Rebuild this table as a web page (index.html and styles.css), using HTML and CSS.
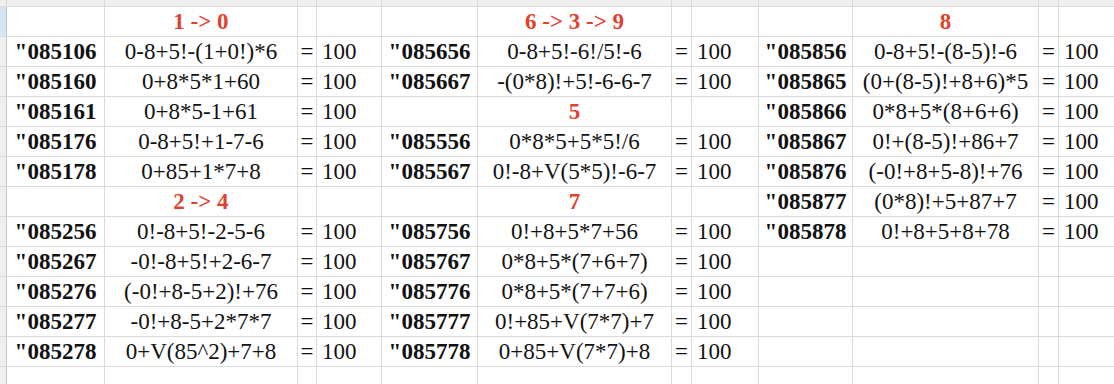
FILE: index.html
```html
<!DOCTYPE html>
<html>
<head>
<meta charset="utf-8">
<link rel="stylesheet" href="styles.css">
</head>
<body>
<div class="sheet">
  <div class="corner"></div>
  <div class="ch"></div><div class="ch"></div><div class="ch"></div><div class="ch"></div><div class="ch"></div><div class="ch"></div><div class="ch"></div><div class="ch"></div><div class="ch"></div><div class="ch"></div><div class="ch"></div><div class="ch"></div>

  <div class="rh sel"></div>
  <div class="c"></div><div class="c t">1 -&gt; 0</div><div class="c"></div><div class="c"></div>
  <div class="c"></div><div class="c t">6 -&gt; 3 -&gt; 9</div><div class="c"></div><div class="c"></div>
  <div class="c"></div><div class="c t">8</div><div class="c"></div><div class="c"></div>

  <div class="rh"></div>
  <div class="c k">"085106</div><div class="c f">0-8+5!-(1+0!)*6</div><div class="c e">=</div><div class="c v">100</div>
  <div class="c k">"085656</div><div class="c f">0-8+5!-6!/5!-6</div><div class="c e">=</div><div class="c v">100</div>
  <div class="c k">"085856</div><div class="c f">0-8+5!-(8-5)!-6</div><div class="c e">=</div><div class="c v">100</div>

  <div class="rh"></div>
  <div class="c k">"085160</div><div class="c f">0+8*5*1+60</div><div class="c e">=</div><div class="c v">100</div>
  <div class="c k">"085667</div><div class="c f">-(0*8)!+5!-6-6-7</div><div class="c e">=</div><div class="c v">100</div>
  <div class="c k">"085865</div><div class="c f">(0+(8-5)!+8+6)*5</div><div class="c e">=</div><div class="c v">100</div>

  <div class="rh"></div>
  <div class="c k">"085161</div><div class="c f">0+8*5-1+61</div><div class="c e">=</div><div class="c v">100</div>
  <div class="c"></div><div class="c t">5</div><div class="c"></div><div class="c"></div>
  <div class="c k">"085866</div><div class="c f">0*8+5*(8+6+6)</div><div class="c e">=</div><div class="c v">100</div>

  <div class="rh"></div>
  <div class="c k">"085176</div><div class="c f">0-8+5!+1-7-6</div><div class="c e">=</div><div class="c v">100</div>
  <div class="c k">"085556</div><div class="c f">0*8*5+5*5!/6</div><div class="c e">=</div><div class="c v">100</div>
  <div class="c k">"085867</div><div class="c f">0!+(8-5)!+86+7</div><div class="c e">=</div><div class="c v">100</div>

  <div class="rh"></div>
  <div class="c k">"085178</div><div class="c f">0+85+1*7+8</div><div class="c e">=</div><div class="c v">100</div>
  <div class="c k">"085567</div><div class="c f">0!-8+V(5*5)!-6-7</div><div class="c e">=</div><div class="c v">100</div>
  <div class="c k">"085876</div><div class="c f">(-0!+8+5-8)!+76</div><div class="c e">=</div><div class="c v">100</div>

  <div class="rh"></div>
  <div class="c"></div><div class="c t">2 -&gt; 4</div><div class="c"></div><div class="c"></div>
  <div class="c"></div><div class="c t">7</div><div class="c"></div><div class="c"></div>
  <div class="c k">"085877</div><div class="c f">(0*8)!+5+87+7</div><div class="c e">=</div><div class="c v">100</div>

  <div class="rh"></div>
  <div class="c k">"085256</div><div class="c f">0!-8+5!-2-5-6</div><div class="c e">=</div><div class="c v">100</div>
  <div class="c k">"085756</div><div class="c f">0!+8+5*7+56</div><div class="c e">=</div><div class="c v">100</div>
  <div class="c k">"085878</div><div class="c f">0!+8+5+8+78</div><div class="c e">=</div><div class="c v">100</div>

  <div class="rh"></div>
  <div class="c k">"085267</div><div class="c f">-0!-8+5!+2-6-7</div><div class="c e">=</div><div class="c v">100</div>
  <div class="c k">"085767</div><div class="c f">0*8+5*(7+6+7)</div><div class="c e">=</div><div class="c v">100</div>
  <div class="c"></div><div class="c"></div><div class="c"></div><div class="c"></div>

  <div class="rh"></div>
  <div class="c k">"085276</div><div class="c f">(-0!+8-5+2)!+76</div><div class="c e">=</div><div class="c v">100</div>
  <div class="c k">"085776</div><div class="c f">0*8+5*(7+7+6)</div><div class="c e">=</div><div class="c v">100</div>
  <div class="c"></div><div class="c"></div><div class="c"></div><div class="c"></div>

  <div class="rh"></div>
  <div class="c k">"085277</div><div class="c f">-0!+8-5+2*7*7</div><div class="c e">=</div><div class="c v">100</div>
  <div class="c k">"085777</div><div class="c f">0!+85+V(7*7)+7</div><div class="c e">=</div><div class="c v">100</div>
  <div class="c"></div><div class="c"></div><div class="c"></div><div class="c"></div>

  <div class="rh"></div>
  <div class="c k">"085278</div><div class="c f">0+V(85^2)+7+8</div><div class="c e">=</div><div class="c v">100</div>
  <div class="c k">"085778</div><div class="c f">0+85+V(7*7)+8</div><div class="c e">=</div><div class="c v">100</div>
  <div class="c"></div><div class="c"></div><div class="c"></div><div class="c"></div>

  <div class="rh"></div>
  <div class="c"></div><div class="c"></div><div class="c"></div><div class="c"></div>
  <div class="c"></div><div class="c"></div><div class="c"></div><div class="c"></div>
  <div class="c"></div><div class="c"></div><div class="c"></div><div class="c"></div>
</div>
</body>
</html>
```

FILE: styles.css
```css
html, body {
  margin: 0;
  padding: 0;
  background: #ffffff;
}

.sheet {
  width: 1114px;
  height: 384px;
  overflow: hidden;
  display: grid;
  grid-template-columns: 6px 97px 192px 18px 64px 95px 193px 19px 66px 93px 185px 19px 1fr;
  grid-template-rows: 6px repeat(13, 29px);
  gap: 1px;
  background: #dadada;
  font-family: "Liberation Serif", "Times New Roman", serif;
  font-size: 23px;
  line-height: 30px;
  color: #111111;
}

.corner, .ch {
  background: #efefef;
}

.rh {
  background: #efefef;
  border-right: 1px solid #c6c6c6;
  margin-right: -1px;
}

.rh.sel {
  background: #d7e4f2;
}

.c {
  background: #ffffff;
  white-space: nowrap;
  overflow: hidden;
}

.k {
  font-weight: bold;
  text-align: center;
}

.f {
  text-align: center;
}

.e {
  text-align: center;
}

.v {
  padding-left: 5px;
}

.t {
  text-align: center;
  font-weight: bold;
  color: #e0432d;
}
```
